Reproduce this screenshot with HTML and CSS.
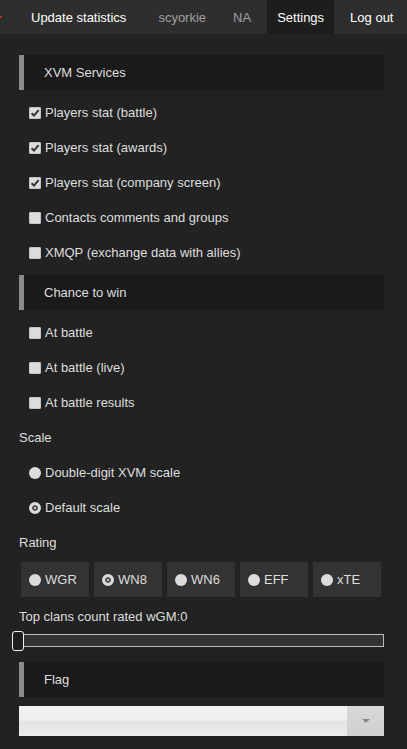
FILE: index.html
```html
<!DOCTYPE html>
<html>
<head>
<meta charset="utf-8">
<link rel="stylesheet" href="styles.css">
</head>
<body>
<nav class="nav">
  <span class="nav-mark"></span>
  <a class="nav-item strong first">Update statistics</a>
  <span class="nav-item muted">scyorkie</span>
  <span class="nav-item muted">NA</span>
  <a class="nav-item strong active">Settings</a>
  <a class="nav-item strong">Log out</a>
</nav>
<main class="content">
  <div class="header">XVM Services</div>
  <div class="list">
    <label class="row"><span class="cb on"><svg viewBox="0 0 12 12"><path d="M2.6 6.2 L5 8.6 L9.6 3.2" fill="none" stroke="#333" stroke-width="2"/></svg></span>Players stat (battle)</label>
    <label class="row"><span class="cb on"><svg viewBox="0 0 12 12"><path d="M2.6 6.2 L5 8.6 L9.6 3.2" fill="none" stroke="#333" stroke-width="2"/></svg></span>Players stat (awards)</label>
    <label class="row"><span class="cb on"><svg viewBox="0 0 12 12"><path d="M2.6 6.2 L5 8.6 L9.6 3.2" fill="none" stroke="#333" stroke-width="2"/></svg></span>Players stat (company screen)</label>
    <label class="row"><span class="cb"></span>Contacts comments and groups</label>
    <label class="row"><span class="cb"></span>XMQP (exchange data with allies)</label>
  </div>
  <div class="header">Chance to win</div>
  <div class="list last">
    <label class="row"><span class="cb"></span>At battle</label>
    <label class="row"><span class="cb"></span>At battle (live)</label>
    <label class="row"><span class="cb"></span>At battle results</label>
  </div>
  <div class="label">Scale</div>
  <label class="row"><span class="rb"></span>Double-digit XVM scale</label>
  <label class="row"><span class="rb on"></span>Default scale</label>
  <div class="label">Rating</div>
  <div class="rating">
    <label class="rbtn"><span class="rb"></span>WGR</label>
    <label class="rbtn"><span class="rb on"></span>WN8</label>
    <label class="rbtn"><span class="rb"></span>WN6</label>
    <label class="rbtn"><span class="rb"></span>EFF</label>
    <label class="rbtn"><span class="rb"></span>xTE</label>
  </div>
  <div class="slider-label">Top clans count rated wGM:0</div>
  <div class="slider"><span class="thumb"></span></div>
  <div class="header flag">Flag</div>
  <div class="select"><span class="select-body"></span><span class="select-arrow"><span class="tri"></span></span></div>
</main>
</body>
</html>
```
FILE: styles.css
```css
html, body {
  margin: 0;
  padding: 0;
  background: #222222;
}
body {
  font-family: "Liberation Sans", Arial, sans-serif;
  font-size: 13px;
  color: #dcdcdc;
  width: 407px;
  height: 749px;
  overflow: hidden;
}
.nav {
  display: flex;
  align-items: stretch;
  height: 34px;
  background: #2e2e2e;
  padding-right: 0;
  position: relative;
}
.nav-mark {
  position: absolute;
  left: 0;
  top: 16px;
  width: 2px;
  height: 2px;
  background: #a33;
}
.nav-item {
  display: flex;
  align-items: center;
  padding: 0 10px;
  margin-left: 6px;
  text-decoration: none;
}
.nav-item.first {
  margin-left: 21px;
}
.strong {
  color: #ffffff;
}
.muted {
  color: #a0a0a0;
  margin-left: 12px;
}
.muted + .muted {
  margin-left: 7px;
}
.active {
  background: #1d1d1d;
}
.content {
  padding: 21px 23px 0 19px;
}
.header {
  height: 35px;
  display: flex;
  align-items: center;
  background: #1a1a1a;
  border-left: 5px solid #8a8a8a;
  padding-left: 20px;
  color: #dedede;
  margin-bottom: 5px;
}
.list {
  margin-bottom: 5px;
}
.list.last {
  margin-bottom: 0;
}
.row {
  height: 35px;
  display: flex;
  align-items: center;
  padding-left: 10px;
  color: #dedede;
}
.cb {
  width: 12px;
  height: 12px;
  background: #dcdcdc;
  border-radius: 2px;
  margin-right: 4px;
  display: flex;
  align-items: center;
  justify-content: center;
  box-shadow: inset 0 0 0 1px #c4c4c4;
}
.cb svg {
  width: 12px;
  height: 12px;
}
.rb {
  width: 12px;
  height: 12px;
  border-radius: 50%;
  background: #dcdcdc;
  margin-right: 4px;
  box-sizing: border-box;
}
.rb.on {
  background: #f4f4f4;
  border: 3px solid #dcdcdc;
  box-shadow: inset 0 0 0 2px #4a4a4a;
}
.label {
  height: 35px;
  display: flex;
  align-items: center;
  color: #dedede;
}
.rating {
  display: flex;
  gap: 5px;
  padding-left: 2px;
  margin-top: 2px;
}
.rbtn {
  width: 68px;
  height: 35px;
  background: #333333;
  display: flex;
  align-items: center;
  padding-left: 8px;
  box-sizing: border-box;
  color: #dedede;
}
.slider-label {
  height: 34px;
  display: flex;
  align-items: center;
  color: #dedede;
  margin-top: 2px;
}
.slider {
  height: 13px;
  border: 1px solid #bdbdbd;
  background: #333333;
  box-sizing: border-box;
  position: relative;
  margin-top: 1px;
  margin-bottom: 15px;
}
.thumb {
  position: absolute;
  left: -8px;
  top: -4px;
  width: 10px;
  height: 18px;
  border: 1.5px solid #f0f0f0;
  border-radius: 3px;
  background: #1e1e1e;
}
.header.flag {
  margin-bottom: 9px;
}
.select {
  height: 30px;
  display: flex;
}
.select-body {
  flex: 1;
  background: linear-gradient(#f2f2f2 0%, #eeeeee 48%, #e4e4e4 52%, #ececec 100%);
}
.select-arrow {
  width: 37px;
  background: linear-gradient(#d8d8d8, #d0d0d0);
  display: flex;
  align-items: center;
  justify-content: center;
}
.tri {
  width: 0;
  height: 0;
  border-left: 4px solid transparent;
  border-right: 4px solid transparent;
  border-top: 4px solid #888;
}
```
